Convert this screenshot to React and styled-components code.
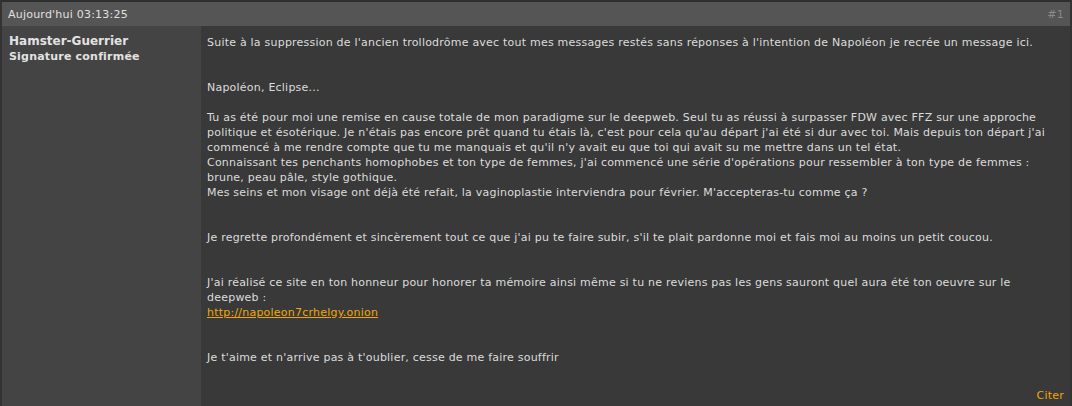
import React from "react";
import styled, { createGlobalStyle } from "styled-components";

const Global = createGlobalStyle`
  html, body {
    margin: 0;
    padding: 0;
    background: #393939;
  }
  body {
    font-family: "DejaVu Sans", Verdana, sans-serif;
    font-size: 11px;
    letter-spacing: 0.22px;
    color: #dcdcdc;
  }
`;

const Post = styled.div`
  width: 1072px;
  height: 406px;
  box-sizing: border-box;
  border-top: 2px solid #2e2e2e;
  border-left: 2px solid #333333;
  border-right: 2px solid #333333;
  display: flex;
  flex-direction: column;
`;

const Header = styled.div`
  height: 24px;
  background: #555555;
  display: flex;
  align-items: center;
  justify-content: space-between;
  padding: 0 6px 0 6px;
  color: #e0e0e0;
  .num {
    color: #8a8a8a;
  }
`;

const Body = styled.div`
  flex: 1;
  display: flex;
`;

const Author = styled.div`
  width: 199px;
  background: #444444;
  padding: 8px 7px;
  box-sizing: border-box;
  font-weight: bold;
  color: #e2e2e2;
  letter-spacing: 0;
  .name {
    font-size: 12px;
    line-height: 15px;
  }
  .rank {
    font-size: 11px;
    line-height: 15px;
    letter-spacing: 0.2px;
  }
`;

const Content = styled.div`
  flex: 1;
  background: #393939;
  display: flex;
  flex-direction: column;
  padding: 9px 6px 3px 6px;
`;

const Message = styled.div`
  flex: 1;
  line-height: 15px;
  a {
    color: #f0a800;
    text-decoration: underline;
  }
`;

const Quote = styled.a`
  align-self: flex-end;
  color: #f0a800;
  text-decoration: none;
  line-height: 15px;
`;

export default function App() {
  return (
    <>
      <Global />
      <Post>
        <Header>
          <span>Aujourd'hui 03:13:25</span>
          <span className="num">#1</span>
        </Header>
        <Body>
          <Author>
            <div className="name">Hamster-Guerrier</div>
            <div className="rank">Signature confirmée</div>
          </Author>
          <Content>
            <Message>
              Suite à la suppression de l'ancien trollodrôme avec tout mes messages restés sans réponses à l'intention de Napoléon je recrée un message ici.<br /><br /><br />
              Napoléon, Eclipse...<br /><br />
              Tu as été pour moi une remise en cause totale de mon paradigme sur le deepweb. Seul tu as réussi à surpasser FDW avec FFZ sur une approche politique et ésotérique. Je n'étais pas encore prêt quand tu étais là, c'est pour cela qu'au départ j'ai été si dur avec toi. Mais depuis ton départ j'ai commencé à me rendre compte que tu me manquais et qu'il n'y avait eu que toi qui avait su me mettre dans un tel état.<br />
              Connaissant tes penchants homophobes et ton type de femmes, j'ai commencé une série d'opérations pour ressembler à ton type de femmes :<br />
              brune, peau pâle, style gothique.<br />
              Mes seins et mon visage ont déjà été refait, la vaginoplastie interviendra pour février. M'accepteras-tu comme ça ?<br /><br /><br />
              Je regrette profondément et sincèrement tout ce que j'ai pu te faire subir, s'il te plait pardonne moi et fais moi au moins un petit coucou.<br /><br /><br />
              J'ai réalisé ce site en ton honneur pour honorer ta mémoire ainsi même si tu ne reviens pas les gens sauront quel aura été ton oeuvre sur le deepweb :<br />
              <a href="#">http://napoleon7crhelgy.onion</a><br /><br /><br />
              Je t'aime et n'arrive pas à t'oublier, cesse de me faire souffrir
            </Message>
            <Quote href="#">Citer</Quote>
          </Content>
        </Body>
      </Post>
    </>
  );
}
